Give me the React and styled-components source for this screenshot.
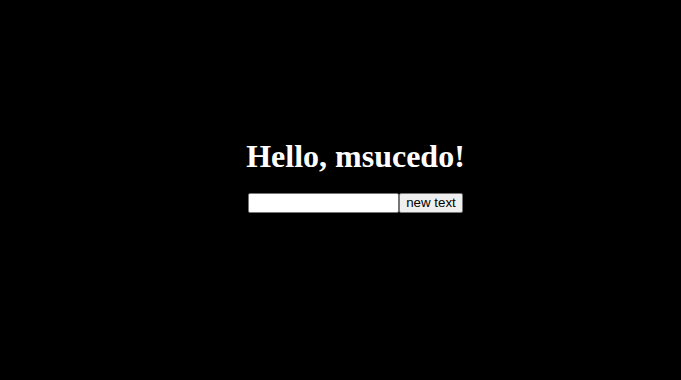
import React, { useState } from 'react';
import styled, { createGlobalStyle } from 'styled-components';

const GlobalStyle = createGlobalStyle`
html, body {
  margin: 0;
  padding: 0;
  background-color: black;
}
`;

const Page = styled.div`
display: flex;
flex-direction: column;
align-items: center;
justify-content: center;
box-sizing: border-box;
height: 100vh;
padding: 0 0 30px 30px;
background-color: black;
color: white;
font-family: "Liberation Serif", "Times New Roman", serif;
`;

const Title = styled.h1`
font-size: 32px;
font-weight: bold;
margin: 0 0 18px 0;
`;

const Row = styled.div`
display: flex;
flex-direction: row;
align-items: center;
`;

const Input = styled.input`
width: 151px;
height: 20px;
box-sizing: border-box;
border: 1px solid #767676;
border-radius: 2px;
padding: 1px 2px;
background-color: white;
font-family: "Liberation Sans", Arial, sans-serif;
font-size: 13px;
`;

const Button = styled.button`
height: 20px;
box-sizing: border-box;
padding: 1px 6px;
font-family: "Liberation Sans", Arial, sans-serif;
font-size: 13.33px;
color: black;
background-color: #efefef;
border: 1px solid #767676;
border-radius: 2px;
`;

const App = () => {
  const [text, setText] = useState('');
  return (
    <>
      <GlobalStyle />
      <Page>
        <Title>Hello, msucedo!</Title>
        <Row>
          <Input value={text} onChange={e => setText(e.target.value)} />
          <Button>new text</Button>
        </Row>
      </Page>
    </>
  );
};

export default App;
